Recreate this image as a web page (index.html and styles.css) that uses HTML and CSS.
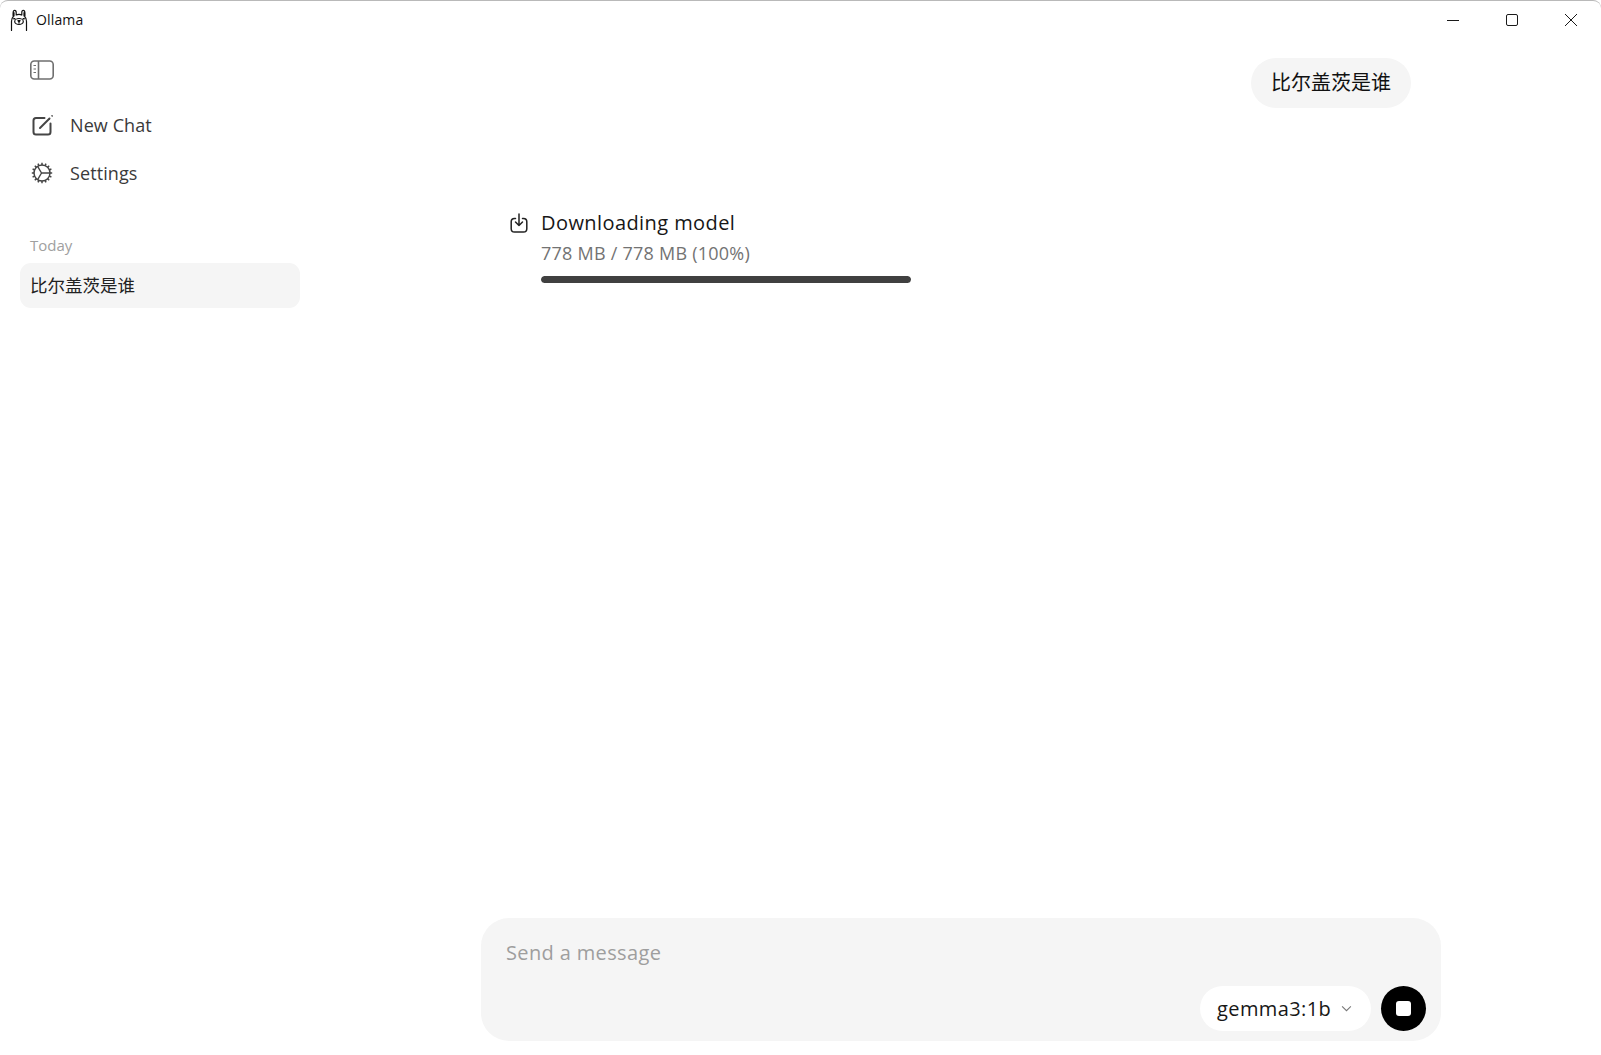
FILE: index.html
```html
<!DOCTYPE html>
<html lang="zh">
<head>
<meta charset="utf-8">
<title>Ollama</title>
<link rel="stylesheet" href="styles.css">
</head>
<body>
<div class="window">
  <header class="titlebar">
    <div class="app">
      <svg class="app-icon" viewBox="0 0 18 22" fill="none" stroke="#111" stroke-width="1.200" stroke-linecap="round" stroke-linejoin="round"><path d="M1.500 21.500V12.500C1.500 10 2 8.800 3.200 7.800V3.500C3.200 2 3.800 1.300 4.700 1.300S6.200 2 6.200 3.500V6C7.100 5.500 8 5.300 9 5.300s1.900.2 2.800.7V3.500c0-1.500.6-2.200 1.500-2.200s1.500.7 1.500 2.200v4.300c1.200 1 1.700 2.200 1.700 4.700v9"/><path d="M3.700 3.800v3M14.300 3.800v3" stroke-width="1.800"/><ellipse cx="9" cy="12.500" rx="4.300" ry="3"/><path d="M7.900 11.700h2.200L9 13zM9 13v1.200"/><path d="M3.800 9.800h1M13.200 9.800h1" stroke-width="1.500"/></svg>
      <span class="app-name">Ollama</span>
    </div>
    <div class="controls">
      <svg class="ctl" viewBox="0 0 12 12" fill="none" stroke="#1a1a1a" stroke-width="1"><path d="M0 6.500h12"/></svg>
      <svg class="ctl" viewBox="0 0 12 12" fill="none" stroke="#1a1a1a" stroke-width="1"><rect x=".5" y=".5" width="11" height="11" rx="1.500"/></svg>
      <svg class="ctl" viewBox="0 0 12 12" fill="none" stroke="#1a1a1a" stroke-width="1"><path d="M0 0l12 12M12 0L0 12"/></svg>
    </div>
  </header>
  <div class="content">
    <aside class="sidebar">
      <svg class="toggle" viewBox="0 0 24 20" fill="none" stroke="#6f6f6f" stroke-width="1.600"><rect x=".8" y="1" width="22.400" height="18" rx="3.500"/><path d="M8.500 1v18"/><path d="M3.500 5.500h2.500M3.500 9h2.500M3.500 12.500h2.500" stroke-width="1.200"/></svg>
      <nav class="nav">
        <a class="nav-item">
          <svg class="nav-icon" viewBox="0 0 22 22" fill="none" stroke="#454545" stroke-width="2" stroke-linecap="round" stroke-linejoin="round"><path d="M13.500 4H5A2.500 2.500 0 0 0 2.500 6.500v11.500A2.500 2.500 0 0 0 5 20.500h12a2.500 2.500 0 0 0 2.500-2.500V9.500"/><path d="M9 14L18.500 4.500"/><path d="M21 1.800l.2.2" stroke-width="1.500"/></svg>
          <span>New Chat</span>
        </a>
        <a class="nav-item">
          <svg class="nav-icon" viewBox="0 0 22 22" fill="none" stroke="#454545" stroke-width="1.500" stroke-linejoin="round"><circle cx="11" cy="11" r="8"/><path d="M10.500 11H19M10.500 11L6.500 4.200M10.500 11L6.500 17.800" stroke-width="1.400"/><path stroke-width="1.500" d="M11 .8v2.400M11 18.800v2.400M.8 11h2.400M18.800 11h2.400M3.800 3.800l1.700 1.700M16.500 16.500l1.700 1.700M18.200 3.800l-1.700 1.700M5.500 16.500l-1.700 1.700M7 1.600l.9 2.200M14.100 18.200l.9 2.200M15 1.600l-.9 2.200M7.900 18.200l-.9 2.200M1.600 7l2.200.9M18.200 14.100l2.200.9M20.400 7l-2.200.9M3.800 14.100l-2.200.9"/></svg>
          <span>Settings</span>
        </a>
      </nav>
      <div class="section-label">Today</div>
      <div class="chat-row">比尔盖茨是谁</div>
    </aside>
    <main class="main">
      <div class="thread">
        <div class="user-line"><div class="bubble">比尔盖茨是谁</div></div>
        <div class="download">
          <svg class="dl-icon" viewBox="0 0 18 20" fill="none" stroke="#222" stroke-width="1.500" stroke-linecap="round" stroke-linejoin="round"><path d="M5.500 5.500H4.500a3.300 3.300 0 0 0-3.300 3.300v6.900A3.300 3.300 0 0 0 4.500 19h9a3.300 3.300 0 0 0 3.300-3.300V8.800a3.300 3.300 0 0 0-3.300-3.300h-1"/><path d="M9 1v11.500M5.500 9L9 12.500 12.500 9"/></svg>
          <div class="dl-body">
            <div class="dl-title">Downloading model</div>
            <div class="dl-size">778 MB / 778 MB (100%)</div>
            <div class="dl-track"><div class="dl-fill" style="width:100%"></div></div>
          </div>
        </div>
      </div>
      <div class="composer">
        <div class="placeholder">Send a message</div>
        <div class="composer-actions">
          <div class="model-pill">
            <span>gemma3:1b</span>
            <svg class="chev" viewBox="0 0 12 8" fill="none" stroke="#777" stroke-width="1.200"><path d="M1 1.500l5 5 5-5"/></svg>
          </div>
          <div class="stop"><div class="stop-square"></div></div>
        </div>
      </div>
    </main>
  </div>
</div>
</body>
</html>
```
FILE: styles.css
```css
* { box-sizing: border-box; }
html, body { margin: 0; height: 100%; background: #fff; }
body { font-family: "Open Sans", "Noto Sans CJK SC", sans-serif; color: #1a1a1a; overflow: hidden; }
.window { height: 1055px; display: flex; flex-direction: column; border-top: 1px solid #b9b9b9; border-radius: 8px 8px 0 0; background: #fff; }
.titlebar { height: 37px; flex: none; display: flex; justify-content: space-between; align-items: center; }
.app { display: flex; align-items: center; padding-left: 10px; gap: 8px; }
.app-icon { width: 18px; height: 22px; }
.app-name { font-size: 14px; letter-spacing: .15px; color: #111; }
.controls { display: flex; gap: 47px; padding-right: 24px; }
.ctl { width: 12px; height: 12px; display: block; }
.content { flex: 1; display: flex; min-height: 0; }
.sidebar { width: 320px; flex: none; padding: 22px 20px 0; display: flex; flex-direction: column; }
.toggle { width: 24px; height: 20px; margin-left: 10px; }
.nav { margin-top: 29px; display: flex; flex-direction: column; gap: 16px; }
.nav-item { display: flex; align-items: center; gap: 17px; padding-left: 11px; height: 32px; font-size: 18px; letter-spacing: .1px; color: #3a3a3a; }
.nav-icon { width: 22px; height: 22px; }
.section-label { margin-top: 46px; padding-left: 10px; font-size: 15px; line-height: 20px; color: #a0a0a0; }
.chat-row { margin-top: 8px; width: 280px; height: 45px; line-height: 45px; padding-left: 10px; border-radius: 11px; background: #f5f5f5; font-size: 17.500px; color: #222; }
.main { flex: 1; min-width: 0; display: flex; flex-direction: column; align-items: center; padding-left: 1px; }
.thread { flex: 1; width: 960px; padding: 20px 30px 0; }
.user-line { display: flex; justify-content: flex-end; }
.bubble { height: 50px; line-height: 50px; padding: 0 20px; border-radius: 25px; background: #f5f5f5; font-size: 20px; color: #111; }
.download { display: flex; gap: 12px; margin-top: 102px; }
.dl-icon { width: 18px; height: 20px; margin-top: 3px; flex: none; margin-left: -1px; margin-right: 1px; }
.dl-body { width: 370px; }
.dl-title { font-size: 20px; line-height: 26px; letter-spacing: .42px; color: #171717; }
.dl-size { font-size: 18px; line-height: 26px; margin-top: 4px; letter-spacing: .24px; color: #737373; }
.dl-track { margin-top: 10px; height: 7px; border-radius: 4px; background: #e5e5e5; overflow: hidden; }
.dl-fill { height: 100%; border-radius: 4px; background: #404040; }
.composer { width: 960px; height: 123px; margin-bottom: 14px; flex: none; border-radius: 28px; background: #f5f5f5; padding: 21px 15px 10px 25px; display: flex; flex-direction: column; justify-content: space-between; }
.placeholder { font-size: 20px; line-height: 27px; letter-spacing: .36px; color: #9e9e9e; }
.composer-actions { display: flex; justify-content: flex-end; gap: 10px; }
.model-pill { height: 45px; padding: 0 19px 0 17px; width: 171px; border-radius: 23px; background: #fff; display: flex; align-items: center; justify-content: space-between; font-size: 20px; letter-spacing: .4px; color: #171717; }
.chev { width: 11px; height: 7px; }
.stop { width: 45px; height: 45px; border-radius: 50%; background: #000; display: flex; align-items: center; justify-content: center; }
.stop-square { width: 15px; height: 15px; border-radius: 3px; background: #fff; }
```
